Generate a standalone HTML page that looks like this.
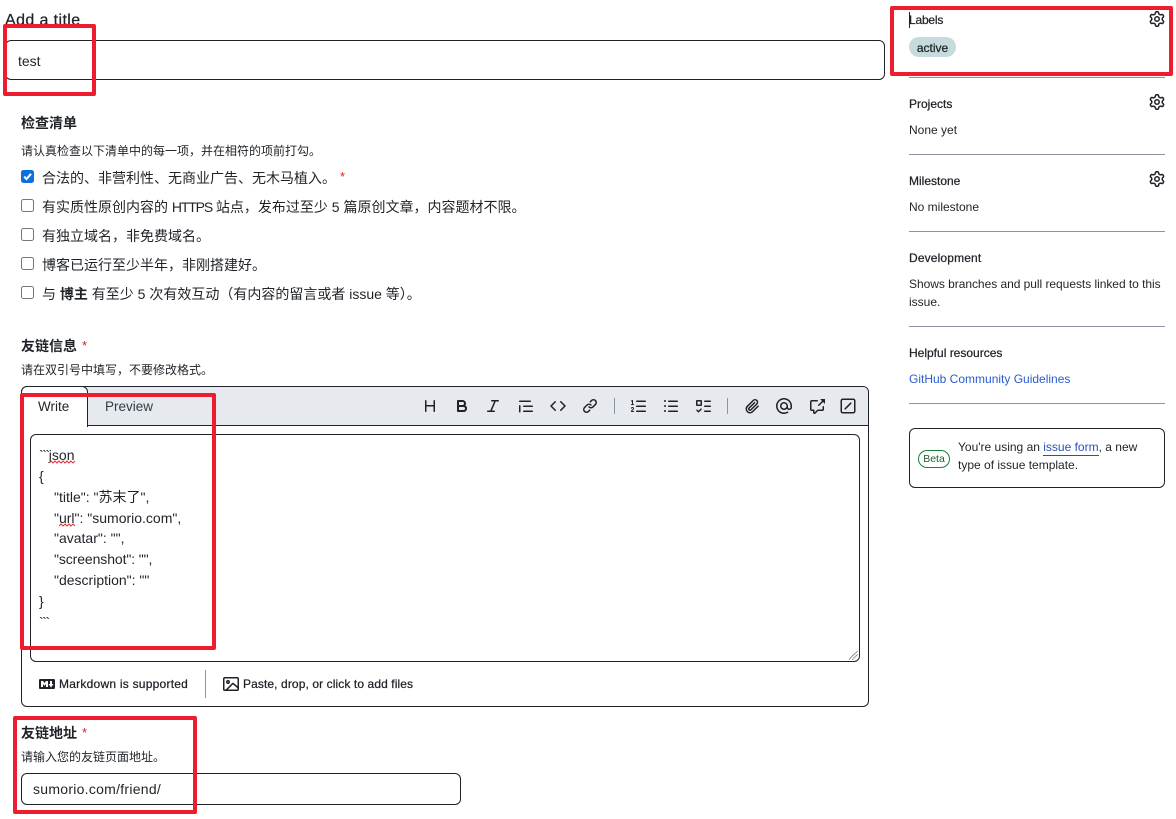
<!DOCTYPE html>
<html lang="zh-CN"><head><meta charset="utf-8"><title>Issue form</title>
<style>
html,body{margin:0;padding:0;background:#fff}
#p{position:relative;width:1176px;height:819px;overflow:hidden;background:#fff;color:#1f2328;font-family:"Liberation Sans","Noto Sans CJK SC",sans-serif;font-size:14px}
.t{position:absolute;white-space:nowrap;line-height:20px;height:20px}
.s{font-size:12px}
.b{font-weight:700}
.m{-webkit-text-stroke:.25px #1f2328}
.box{position:absolute;box-sizing:border-box;border:1px solid #1f2328;border-radius:6px}
.hr{position:absolute;left:909px;width:256px;height:1px;background:#8c959f}
.cb{position:absolute;left:21px;width:13px;height:13px;box-sizing:border-box;border:1px solid #767676;border-radius:2.5px;background:#fff}
.red{position:absolute;box-sizing:border-box;border:4px solid #ed1c2e;border-radius:2px}
svg.i{position:absolute;width:16px;height:16px;fill:#1f2328}
.star{color:#cf222e}
.bt{letter-spacing:-1.4px}
</style></head><body><div id="p">

<div class="t m" style="left:5px;top:11px;font-size:16px;letter-spacing:.4px">Add a title</div>
<div class="box" style="left:5px;top:40px;width:880px;height:40px"></div>
<div class="t" style="left:18px;top:51px;font-size:14px">test</div>

<div class="t b" style="left:21px;top:113px">检查清单</div>
<div class="t s" style="left:21px;top:141px">请认真检查以下清单中的每一项&#65292;并在相符的项前打勾。</div>

<div class="cb" style="top:170px;background:#0f6fe0;border-color:#0f6fe0"><svg style="position:absolute;left:0;top:0" width="11" height="11" viewBox="0 0 11 11"><path d="M2.2 5.6 4.5 8 9 2.8" fill="none" stroke="#fff" stroke-width="2"/></svg></div>
<div class="t" style="left:42px;top:168px">合法的、非营利性、无商业广告、无木马植入。</div>
<div class="t star" style="left:340px;top:167px;font-size:13px">*</div>
<div class="cb" style="top:199px"></div>
<div class="t" style="left:42px;top:197px">有实质性原创内容的 <span style="letter-spacing:-1.15px">HTTPS</span> 站点&#65292;发布过至少 5 篇原创文章&#65292;内容题材不限。</div>
<div class="cb" style="top:228px"></div>
<div class="t" style="left:42px;top:226px">有独立域名&#65292;非免费域名。</div>
<div class="cb" style="top:257px"></div>
<div class="t" style="left:42px;top:255px">博客已运行至少半年&#65292;非刚搭建好。</div>
<div class="cb" style="top:286px"></div>
<div class="t" style="left:42px;top:284px">与 <b>博主</b> 有至少 5 次有效互动&#65288;有内容的留言或者 issue 等&#65289;。</div>

<div class="t b" style="left:21px;top:336px">友链信息</div>
<div class="t star" style="left:82px;top:336px;font-size:13px">*</div>
<div class="t s" style="left:21px;top:360px">请在双引号中填写&#65292;不要修改格式。</div>

<!-- editor -->
<div class="box" style="left:21px;top:386px;width:848px;height:321px"></div>
<div style="position:absolute;left:22px;top:387px;width:846px;height:38px;background:#e6eaef;border-bottom:1px solid #1f2328;border-radius:5px 5px 0 0;box-sizing:content-box"></div>
<div style="position:absolute;left:21px;top:386px;width:67px;height:41px;box-sizing:border-box;background:#fff;border:1px solid #1f2328;border-bottom:0;border-radius:6px 6px 0 0"></div>
<div class="t" style="left:38px;top:397px;font-size:13.5px">Write</div>
<div class="t" style="left:105px;top:397px;font-size:13.5px;color:#333a42">Preview</div>

<svg class="i" style="left:422px;top:398px" viewBox="0 0 16 16"><path d="M3.75 2a.75.75 0 0 1 .75.75V7h7V2.75a.75.75 0 0 1 1.5 0v10.5a.75.75 0 0 1-1.5 0V8.5h-7v4.75a.75.75 0 0 1-1.5 0V2.75A.75.75 0 0 1 3.75 2Z"/></svg>
<svg class="i" style="left:454px;top:398px" viewBox="0 0 16 16"><path d="M4 2h4.5a3.501 3.501 0 0 1 2.852 5.53A3.499 3.499 0 0 1 9.5 14H4a1 1 0 0 1-1-1V3a1 1 0 0 1 1-1Zm1 7v3h4.5a1.5 1.5 0 0 0 0-3Zm3.5-2a1.5 1.5 0 0 0 0-3H5v3Z"/></svg>
<svg class="i" style="left:485px;top:398px" viewBox="0 0 16 16"><path d="M6 2.75A.75.75 0 0 1 6.75 2h6.5a.75.75 0 0 1 0 1.5h-2.505l-3.858 9H9.25a.75.75 0 0 1 0 1.5h-6.5a.75.75 0 0 1 0-1.5h2.505l3.858-9H6.75A.75.75 0 0 1 6 2.75Z"/></svg>
<svg class="i" style="left:518px;top:398px" viewBox="0 0 16 16"><path d="M1.75 2.5h10.5a.75.75 0 0 1 0 1.5H1.75a.75.75 0 0 1 0-1.5Zm4 5h8.5a.75.75 0 0 1 0 1.5h-8.5a.75.75 0 0 1 0-1.5Zm0 5h8.5a.75.75 0 0 1 0 1.5h-8.5a.75.75 0 0 1 0-1.5ZM2.5 7.75v6a.75.75 0 0 1-1.5 0v-6a.75.75 0 0 1 1.5 0Z"/></svg>
<svg class="i" style="left:550px;top:398px" viewBox="0 0 16 16"><path d="m11.28 3.22 4.25 4.25a.75.75 0 0 1 0 1.06l-4.25 4.25a.749.749 0 0 1-1.275-.326.749.749 0 0 1 .215-.734L13.94 8l-3.72-3.72a.749.749 0 0 1 .326-1.275.749.749 0 0 1 .734.215Zm-6.56 0a.751.751 0 0 1 1.042.018.751.751 0 0 1 .018 1.042L2.06 8l3.72 3.72a.749.749 0 0 1-.326 1.275.749.749 0 0 1-.734-.215L.47 8.53a.75.75 0 0 1 0-1.06Z"/></svg>
<svg class="i" style="left:582px;top:398px" viewBox="0 0 16 16"><path d="m7.775 3.275 1.25-1.25a3.5 3.5 0 1 1 4.95 4.95l-2.5 2.5a3.5 3.5 0 0 1-4.95 0 .751.751 0 0 1 .018-1.042.751.751 0 0 1 1.042-.018 1.998 1.998 0 0 0 2.83 0l2.5-2.5a2.002 2.002 0 0 0-2.83-2.83l-1.25 1.25a.751.751 0 0 1-1.042-.018.751.751 0 0 1-.018-1.042Zm-4.69 9.64a1.998 1.998 0 0 0 2.83 0l1.25-1.25a.751.751 0 0 1 1.042.018.751.751 0 0 1 .018 1.042l-1.25 1.25a3.5 3.5 0 1 1-4.95-4.95l2.5-2.5a3.5 3.5 0 0 1 4.95 0 .751.751 0 0 1-.018 1.042.751.751 0 0 1-1.042-.018 1.998 1.998 0 0 0-2.83 0l-2.5 2.5a1.998 1.998 0 0 0 0 2.83Z"/></svg>
<div style="position:absolute;left:614px;top:398px;width:1px;height:16px;background:#8c959f"></div>
<svg class="i" style="left:631px;top:398px" viewBox="0 0 16 16"><path d="M5 3.25a.75.75 0 0 1 .75-.75h8.5a.75.75 0 0 1 0 1.5h-8.5A.75.75 0 0 1 5 3.25Zm0 5a.75.75 0 0 1 .75-.75h8.5a.75.75 0 0 1 0 1.5h-8.5A.75.75 0 0 1 5 8.25Zm0 5a.75.75 0 0 1 .75-.75h8.5a.75.75 0 0 1 0 1.5h-8.5a.75.75 0 0 1-.75-.75ZM.924 10.32a.5.5 0 0 1-.851-.525l.001-.001.001-.002.002-.004.007-.011c.097-.144.215-.273.348-.384.228-.19.588-.392 1.068-.392.468 0 .858.181 1.126.484.259.294.377.673.377 1.038 0 .987-.686 1.495-1.156 1.845l-.047.035c-.303.225-.522.4-.654.597h1.357a.5.5 0 0 1 0 1H.5a.5.5 0 0 1-.5-.5c0-1.005.692-1.52 1.167-1.875l.035-.025c.531-.396.8-.625.8-1.078a.57.57 0 0 0-.128-.376C1.806 10.068 1.695 10 1.5 10a.658.658 0 0 0-.429.163.835.835 0 0 0-.144.153ZM2.003 2.5V6h.503a.5.5 0 0 1 0 1H.5a.5.5 0 0 1 0-1h.503V3.308l-.28.14a.5.5 0 0 1-.446-.895l1.003-.5a.5.5 0 0 1 .723.447Z"/></svg>
<svg class="i" style="left:663px;top:398px" viewBox="0 0 16 16"><path d="M5.75 2.5h8.5a.75.75 0 0 1 0 1.5h-8.5a.75.75 0 0 1 0-1.5Zm0 5h8.5a.75.75 0 0 1 0 1.5h-8.5a.75.75 0 0 1 0-1.5Zm0 5h8.5a.75.75 0 0 1 0 1.5h-8.5a.75.75 0 0 1 0-1.5ZM2 14a1 1 0 1 1 0-2 1 1 0 0 1 0 2Zm1-6a1 1 0 1 1-2 0 1 1 0 0 1 2 0ZM2 4a1 1 0 1 1 0-2 1 1 0 0 1 0 2Z"/></svg>
<svg class="i" style="left:695px;top:398px" viewBox="0 0 16 16"><path d="M2 2h4a1 1 0 0 1 1 1v4a1 1 0 0 1-1 1H2a1 1 0 0 1-1-1V3a1 1 0 0 1 1-1Zm4.655 8.595a.75.75 0 0 1 0 1.06L4.03 14.28a.75.75 0 0 1-1.06 0l-1.5-1.5a.749.749 0 0 1 .326-1.275.749.749 0 0 1 .734.215l.97.97 2.095-2.095a.75.75 0 0 1 1.06 0ZM9.75 2.5h5.5a.75.75 0 0 1 0 1.5h-5.5a.75.75 0 0 1 0-1.5Zm0 5h5.5a.75.75 0 0 1 0 1.5h-5.5a.75.75 0 0 1 0-1.5Zm0 5h5.5a.75.75 0 0 1 0 1.5h-5.5a.75.75 0 0 1 0-1.5Zm-7.25-9v3h3v-3Z"/></svg>
<div style="position:absolute;left:727px;top:398px;width:1px;height:16px;background:#8c959f"></div>
<svg class="i" style="left:744px;top:398px" viewBox="0 0 16 16"><path d="M12.212 3.02a1.753 1.753 0 0 0-2.478.003l-5.83 5.83a3.007 3.007 0 0 0-.88 2.127c0 .795.315 1.551.88 2.116.567.567 1.333.89 2.126.89.79 0 1.548-.321 2.116-.89l5.48-5.48a.75.75 0 0 1 1.061 1.06l-5.48 5.48a4.492 4.492 0 0 1-3.177 1.33c-1.2 0-2.345-.487-3.187-1.33a4.483 4.483 0 0 1-1.32-3.177c0-1.195.475-2.341 1.32-3.186l5.83-5.83a3.25 3.25 0 0 1 5.553 2.297c0 .863-.343 1.691-.953 2.301L7.439 12.39c-.375.377-.884.59-1.416.593a1.998 1.998 0 0 1-1.412-.593 1.992 1.992 0 0 1 0-2.828l5.48-5.48a.751.751 0 0 1 1.042.018.751.751 0 0 1 .018 1.042l-5.48 5.48a.492.492 0 0 0 0 .707.499.499 0 0 0 .352.154.51.51 0 0 0 .356-.154l5.833-5.827a1.755 1.755 0 0 0 0-2.481Z"/></svg>
<svg class="i" style="left:776px;top:398px" viewBox="0 0 16 16"><path d="M4.75 2.37a6.501 6.501 0 0 0 6.5 11.26.75.75 0 0 1 .75 1.298A7.999 7.999 0 0 1 .989 4.148 8 8 0 0 1 16 7.75v1.5a2.75 2.75 0 0 1-5.072 1.475 3.999 3.999 0 0 1-6.65-4.19A4 4 0 0 1 12 8v1.25a1.25 1.25 0 0 0 2.5 0V7.867a6.5 6.5 0 0 0-9.75-5.496ZM10.5 8a2.5 2.5 0 1 0-5 0 2.5 2.5 0 0 0 5 0Z"/></svg>
<svg class="i" style="left:809px;top:398px" viewBox="0 0 16 16"><path d="M2.75 3.5a.25.25 0 0 0-.25.25v7.5c0 .138.112.25.25.25h2a.75.75 0 0 1 .75.75v2.19l2.72-2.72a.749.749 0 0 1 .53-.22h4.5a.25.25 0 0 0 .25-.25v-2.5a.75.75 0 0 1 1.5 0v2.5A1.75 1.75 0 0 1 13.25 13H9.06l-2.573 2.573A1.458 1.458 0 0 1 4 14.543V13H2.75A1.75 1.75 0 0 1 1 11.25v-7.5C1 2.784 1.784 2 2.75 2h5.5a.75.75 0 0 1 0 1.5ZM16 1.25v4.146a.25.25 0 0 1-.427.177L14.03 4.03l-3.75 3.75a.749.749 0 0 1-1.275-.326.749.749 0 0 1 .215-.734l3.75-3.75-1.543-1.543A.25.25 0 0 1 11.604 1h4.146a.25.25 0 0 1 .25.25Z"/></svg>
<svg class="i" style="left:840px;top:398px" viewBox="0 0 16 16"><rect x="1.25" y="1.25" width="13.5" height="13.5" rx="1.5" fill="none" stroke="#1f2328" stroke-width="1.5"/><path d="M5.2 10.8 10.8 5.2" fill="none" stroke="#1f2328" stroke-width="1.5" stroke-linecap="round"/></svg>

<!-- textarea -->
<div class="box" style="left:30px;top:434px;width:830px;height:228px"></div>
<svg style="position:absolute;left:848px;top:650px" width="11" height="11" viewBox="0 0 11 11"><path d="M1 9.5 9.5 1M4.5 9.5 9.5 4.5" stroke="#555" stroke-width="1" stroke-dasharray="1 .6" fill="none"/></svg>
<div class="t" style="left:39px;top:445px"><span class="bt">&#96;&#96;&#96;</span>json</div>
<div class="t" style="left:39px;top:466px">{</div>
<div class="t" style="left:54px;top:487px">"title": "苏末了",</div>
<div class="t" style="left:54px;top:508px">"url": "sumorio.com",</div>
<div class="t" style="left:54px;top:528px">"avatar": "",</div>
<div class="t" style="left:54px;top:549px;letter-spacing:-.1px">"screenshot": "",</div>
<div class="t" style="left:54px;top:570px">"description": ""</div>
<div class="t" style="left:39px;top:591px">}</div>
<div class="t bt" style="left:39px;top:612px">&#96;&#96;&#96;</div>
<svg style="position:absolute;left:49px;top:460px" width="27" height="5" viewBox="0 0 27 5"><path d="M0 3 2 1 4 3 6 1 8 3 10 1 12 3 14 1 16 3 18 1 20 3 22 1 24 3 26 1" fill="none" stroke="#e5333c" stroke-width="1"/></svg>
<svg style="position:absolute;left:59px;top:523px" width="18" height="5" viewBox="0 0 18 5"><path d="M0 3 2 1 4 3 6 1 8 3 10 1 12 3 14 1 16 3" fill="none" stroke="#e5333c" stroke-width="1"/></svg>

<!-- footer -->
<svg class="i" style="left:39px;top:676px" viewBox="0 0 16 16"><path d="M14.85 3c.63 0 1.15.52 1.14 1.15v7.7c0 .63-.51 1.15-1.15 1.15H1.15C.52 13 0 12.48 0 11.84V4.15C0 3.52.52 3 1.15 3ZM9 11V5H7L5.5 7 4 5H2v6h2V8l1.5 1.92L7 8v3Zm2.99.5L14.5 8H13V5h-2v3H9.5Z"/></svg>
<div class="t s m" style="left:59px;top:674px;letter-spacing:.24px">Markdown is supported</div>
<div style="position:absolute;left:205px;top:670px;width:1px;height:28px;background:#8c959f"></div>
<svg class="i" style="left:223px;top:676px" viewBox="0 0 16 16"><path d="M16 13.25A1.75 1.75 0 0 1 14.25 15H1.75A1.75 1.75 0 0 1 0 13.25V2.75C0 1.784.784 1 1.75 1h12.5c.966 0 1.75.784 1.75 1.75ZM1.75 2.5a.25.25 0 0 0-.25.25v10.5c0 .138.112.25.25.25h.94l.03-.03 6.077-6.078a1.75 1.75 0 0 1 2.412-.06L14.5 10.31V2.75a.25.25 0 0 0-.25-.25Zm12.5 11a.25.25 0 0 0 .25-.25v-.917l-4.298-3.889a.25.25 0 0 0-.344.009L4.81 13.5ZM7 6a2 2 0 1 1-3.999.001A2 2 0 0 1 7 6ZM5.5 6a.5.5 0 1 0-1 0 .5.5 0 0 0 1 0Z"/></svg>
<div class="t s m" style="left:243px;top:674px;letter-spacing:.1px">Paste, drop, or click to add files</div>

<div class="t b" style="left:21px;top:723px">友链地址</div>
<div class="t star" style="left:82px;top:723px;font-size:13px">*</div>
<div class="t s" style="left:21px;top:747px">请输入您的友链页面地址。</div>
<div class="box" style="left:21px;top:773px;width:440px;height:32px"></div>
<div class="t" style="left:33px;top:779px;font-size:14px;letter-spacing:.27px">sumorio.com/friend/</div>

<!-- sidebar -->
<div style="position:absolute;left:909px;top:12px;width:1px;height:16px;background:#1f2328"></div>
<div class="t s m" style="left:909px;top:10px;letter-spacing:-.2px">Labels</div>
<svg class="i" style="left:1149px;top:11px" viewBox="0 0 16 16"><use href="#gear"/></svg>
<div style="position:absolute;left:909px;top:37px;width:47px;height:20px;border-radius:10px;background:#c5dbdd"></div>
<div class="t s m" style="left:909px;top:38px;width:47px;text-align:center">active</div>
<div class="hr" style="top:77px"></div>

<div class="t s m" style="left:909px;top:94px">Projects</div>
<svg class="i" style="left:1149px;top:94px" viewBox="0 0 16 16"><use href="#gear"/></svg>
<div class="t s" style="left:909px;top:120px">None yet</div>
<div class="hr" style="top:154px"></div>

<div class="t s m" style="left:909px;top:171px">Milestone</div>
<svg class="i" style="left:1149px;top:171px" viewBox="0 0 16 16"><use href="#gear"/></svg>
<div class="t s" style="left:909px;top:197px">No milestone</div>
<div class="hr" style="top:231px"></div>

<div class="t s m" style="left:909px;top:248px;letter-spacing:.15px">Development</div>
<div class="t s" style="left:909px;top:274px;letter-spacing:-.04px">Shows branches and pull requests linked to this</div>
<div class="t s" style="left:909px;top:292px">issue.</div>
<div class="hr" style="top:326px"></div>

<div class="t s m" style="left:909px;top:343px">Helpful resources</div>
<div class="t s" style="left:909px;top:369px;color:#2a5bd0">GitHub Community Guidelines</div>
<div class="hr" style="top:403px"></div>

<div class="box" style="left:909px;top:428px;width:256px;height:60px"></div>
<div style="position:absolute;left:918px;top:450px;width:32px;height:18px;box-sizing:border-box;border:1px solid #1a7f37;border-radius:9px;font-size:10.5px;line-height:16px;text-align:center;color:#1a5f2e">Beta</div>
<div class="t s" style="left:958px;top:437px">You're using an <span style="color:#2a4fb8;border-bottom:1px solid #2a4fb8;display:inline-block;line-height:15px">issue form</span>, a new</div>
<div class="t s" style="left:958px;top:455px">type of issue template.</div>

<svg width="0" height="0" style="position:absolute"><defs><path id="gear" d="M8 0a8.2 8.2 0 0 1 .701.031C9.444.095 9.99.645 10.16 1.29l.288 1.107c.018.066.079.158.212.224.231.114.454.243.668.386.123.082.233.09.299.071l1.103-.303c.644-.176 1.392.021 1.82.63.27.385.506.792.704 1.218.315.675.111 1.422-.364 1.891l-.814.806c-.049.048-.098.147-.088.294.016.257.016.515 0 .772-.01.147.038.246.088.294l.814.806c.475.469.679 1.216.364 1.891a7.977 7.977 0 0 1-.704 1.217c-.428.61-1.176.807-1.82.63l-1.102-.302c-.067-.019-.177-.011-.3.071a5.909 5.909 0 0 1-.668.386c-.133.066-.194.158-.211.224l-.29 1.106c-.168.646-.715 1.196-1.458 1.26a8.006 8.006 0 0 1-1.402 0c-.743-.064-1.289-.614-1.458-1.26l-.289-1.106c-.018-.066-.079-.158-.212-.224a5.738 5.738 0 0 1-.668-.386c-.123-.082-.233-.09-.299-.071l-1.103.303c-.644.176-1.392-.021-1.82-.63a8.12 8.12 0 0 1-.704-1.218c-.315-.675-.111-1.422.363-1.891l.815-.806c.05-.048.098-.147.088-.294a6.214 6.214 0 0 1 0-.772c.01-.147-.038-.246-.088-.294l-.815-.806C.635 6.045.431 5.298.746 4.623a7.92 7.92 0 0 1 .704-1.217c.428-.61 1.176-.807 1.82-.63l1.102.302c.067.019.177.011.3-.071.214-.143.437-.272.668-.386.133-.066.194-.158.211-.224l.29-1.106C6.009.645 6.556.095 7.299.03 7.53.01 7.764 0 8 0Zm-.571 1.525c-.036.003-.108.036-.137.146l-.289 1.105c-.147.561-.549.967-.998 1.189-.173.086-.34.183-.5.29-.417.278-.97.423-1.529.27l-1.103-.303c-.109-.03-.175.016-.195.045-.22.312-.412.644-.573.99-.014.031-.021.11.059.19l.815.806c.411.406.562.957.53 1.456a4.709 4.709 0 0 0 0 .582c.032.499-.119 1.05-.53 1.456l-.815.806c-.081.08-.073.159-.059.19.162.346.353.677.573.989.02.03.085.076.195.046l1.102-.303c.56-.153 1.113-.008 1.53.27.161.107.328.204.501.29.447.222.85.629.997 1.189l.289 1.105c.029.109.101.143.137.146a6.6 6.6 0 0 0 1.142 0c.036-.003.108-.036.137-.146l.289-1.105c.147-.561.549-.967.998-1.189.173-.086.34-.183.5-.29.417-.278.97-.423 1.529-.27l1.103.303c.109.029.175-.016.195-.045.22-.313.411-.644.573-.99.014-.031.021-.11-.059-.19l-.815-.806c-.411-.406-.562-.957-.53-1.456a4.709 4.709 0 0 0 0-.582c-.032-.499.119-1.05.53-1.456l.815-.806c.081-.08.073-.159.059-.19a6.464 6.464 0 0 0-.573-.989c-.02-.03-.085-.076-.195-.046l-1.102.303c-.56.153-1.113.008-1.53-.27a4.44 4.44 0 0 0-.501-.29c-.447-.222-.85-.629-.997-1.189l-.289-1.105c-.029-.11-.101-.143-.137-.146a6.6 6.6 0 0 0-1.142 0ZM11 8a3 3 0 1 1-6 0 3 3 0 0 1 6 0ZM9.5 8a1.5 1.5 0 1 0-3.001.001A1.5 1.5 0 0 0 9.5 8Z"/></defs></svg>

<!-- red annotations -->
<div class="red" style="left:3px;top:24px;width:93px;height:72px"></div>
<div class="red" style="left:20px;top:393px;width:196px;height:257px"></div>
<div class="red" style="left:13px;top:716px;width:184px;height:98px"></div>
<div class="red" style="left:890px;top:6px;width:283px;height:70px"></div>
</div></body></html>
